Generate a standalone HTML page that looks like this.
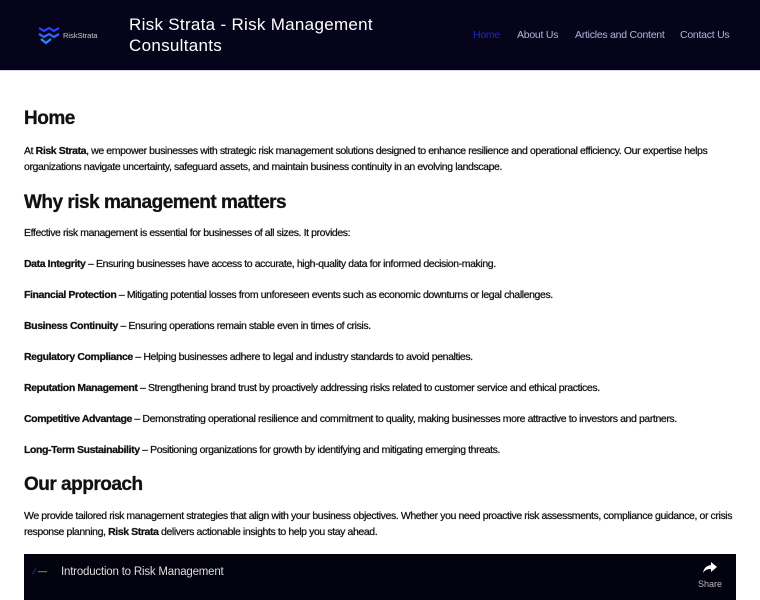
<!DOCTYPE html>
<html><head><style>
body{margin:0;width:760px;height:600px;overflow:hidden;font-family:"Liberation Sans",Arial,sans-serif;background:#fff;color:#111}
.hdr{position:absolute;left:0;top:0;width:760px;height:70px;background:#05041a;border-bottom:1px solid #d8d4f0}
.logo{position:absolute;left:38px;top:25px}
.lt{position:absolute;left:63px;top:31px;font-size:7.5px;color:#ccc}
.title{position:absolute;left:129px;top:14px;font-size:17px;line-height:21px;color:#fff;letter-spacing:.3px}
.nav{position:absolute;top:29px;font-size:10.5px;color:#b8b4dc;letter-spacing:-.25px;white-space:nowrap}
.c{position:absolute;left:24px;width:740px;font-size:10.5px;line-height:16px;letter-spacing:-.4px;-webkit-text-stroke:.25px #111}
h1,h2{margin:0;font-size:19px;font-weight:bold;letter-spacing:-.5px;-webkit-text-stroke:.3px #111}
p{margin:0}
.vid{position:absolute;left:24px;top:554px;width:712px;height:46px;background:#03020f}
</style></head><body>
<div class="hdr">
<svg class="logo" width="22" height="20" viewBox="0 0 22 20"><path d="M1 3l5 3 5-3 5 3 5-3" stroke="#2a3cff" stroke-width="2.2" fill="none"/><path d="M1 9l5 3 5-3 5 3 5-3" stroke="#2a6cff" stroke-width="2.2" fill="none"/><path d="M3 14l5 4 5-4" stroke="#1e90ff" stroke-width="2.2" fill="none"/></svg>
<div class="lt">RiskStrata</div>
<div class="title">Risk Strata - Risk Management<br>Consultants</div>
<div class="nav" style="left:473px;color:#2424c8">Home</div>
<div class="nav" style="left:517px">About Us</div>
<div class="nav" style="left:575px">Articles and Content</div>
<div class="nav" style="left:680px">Contact Us</div>
</div>
<div class="c" style="top:111px"><h1>Home</h1></div>
<div class="c" style="top:143px"><p>At <b>Risk Strata</b>, we empower businesses with strategic risk management solutions designed to enhance resilience and operational efficiency. Our expertise helps<br>organizations navigate uncertainty, safeguard assets, and maintain business continuity in an evolving landscape.</p></div>
<div class="c" style="top:195px"><h2>Why risk management matters</h2></div>
<div class="c" style="top:225px">Effective risk management is essential for businesses of all sizes. It provides:</div>
<div class="c" style="top:256px"><b>Data Integrity</b> – Ensuring businesses have access to accurate, high-quality data for informed decision-making.</div>
<div class="c" style="top:287px"><b>Financial Protection</b> – Mitigating potential losses from unforeseen events such as economic downturns or legal challenges.</div>
<div class="c" style="top:318px"><b>Business Continuity</b> – Ensuring operations remain stable even in times of crisis.</div>
<div class="c" style="top:349px"><b>Regulatory Compliance</b> – Helping businesses adhere to legal and industry standards to avoid penalties.</div>
<div class="c" style="top:380px"><b>Reputation Management</b> – Strengthening brand trust by proactively addressing risks related to customer service and ethical practices.</div>
<div class="c" style="top:411px"><b>Competitive Advantage</b> – Demonstrating operational resilience and commitment to quality, making businesses more attractive to investors and partners.</div>
<div class="c" style="top:442px"><b>Long-Term Sustainability</b> – Positioning organizations for growth by identifying and mitigating emerging threats.</div>
<div class="c" style="top:477px"><h2>Our approach</h2></div>
<div class="c" style="top:508px"><p>We provide tailored risk management strategies that align with your business objectives. Whether you need proactive risk assessments, compliance guidance, or crisis<br>response planning, <b>Risk Strata</b> delivers actionable insights to help you stay ahead.</p></div>
<div class="vid">
<div style="position:absolute;left:10px;top:12px;width:22px;height:14px;color:#2a3cff;font-size:9px">⁄ <span style="color:#ccc">—</span></div>
<div style="position:absolute;left:37px;top:12px;font-size:11.5px;color:#ddd;letter-spacing:-.2px">Introduction to Risk Management</div>
<svg style="position:absolute;left:679px;top:8px" width="14" height="12" viewBox="0 0 14 12"><path d="M8 0l6 5-6 5V7C4 7 2 8 0 11 1 6 3 4 8 3z" fill="#fff"/></svg>
<div style="position:absolute;left:674px;top:25px;font-size:9px;color:#bbb">Share</div>
</div>
</body></html>
